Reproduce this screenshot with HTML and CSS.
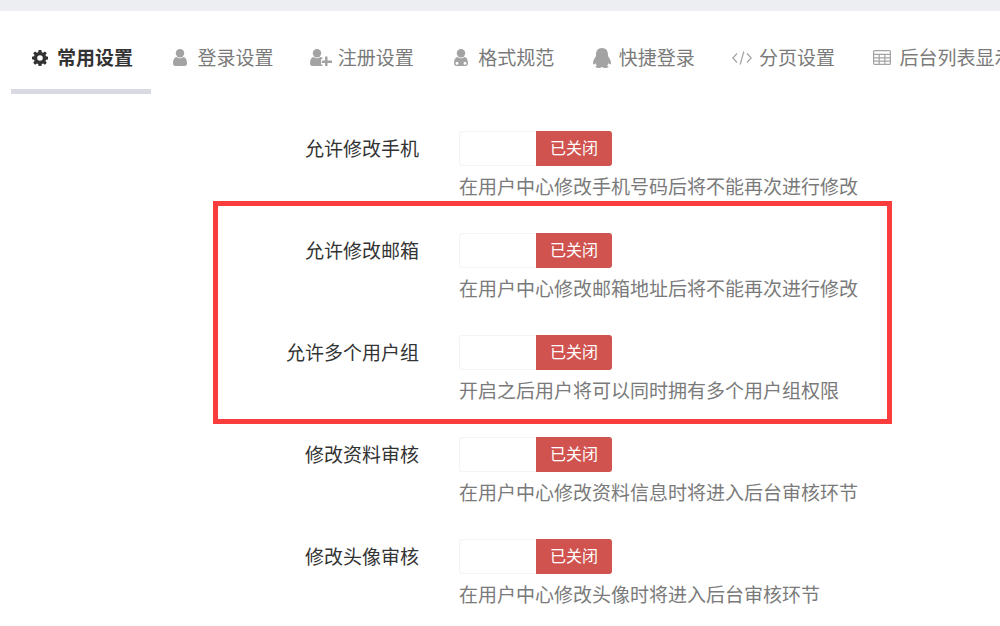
FILE: index.html
```html
<!DOCTYPE html>
<html lang="zh-CN">
<head>
    <meta charset="UTF-8">
    <title>常用设置</title>
    <link rel="stylesheet" href="styles.css">
</head>

<body>
    <div class="top-bar"></div>

    <!-- 选项卡 -->
    <ul class="tabs">
        <li class="tab active">
            <span class="tab-icon">
                <svg width="16" height="16" viewBox="0 0 16 16"><path fill-rule="evenodd" d="M6.600 0h2.800l.4 2.200 1.200.5L12.900 1.400 14.800 3.300 13.500 5.100l.5 1.200 2 .4v2.700l-2 .4-.5 1.200 1.300 1.800-1.900 1.900-1.900-1.300-1.200.5-.4 2.100H6.600l-.4-2.100-1.200-.5-1.900 1.300L1.200 12.700l1.300-1.800-.5-1.200-2-.4V6.700l2-.4.5-1.200L1.200 3.300 3.100 1.400 5 2.700l1.200-.5zM8 5.200a2.800 2.800 0 1 0 0 5.600 2.800 2.800 0 0 0 0-5.600z"/></svg>
            </span>
            常用设置
        </li>
        <li class="tab">
            <span class="tab-icon">
                <svg width="14" height="17" viewBox="0 0 14 17"><circle cx="7" cy="4.300" r="4.200"/><path d="M0 14.500C0 10.500 1.500 8.300 3.600 8c1 .9 2.100 1.300 3.400 1.300S9.400 8.900 10.400 8C12.500 8.300 14 10.500 14 14.500 14 16 13 17 11.600 17H2.400C1 17 0 16 0 14.500z"/></svg>
            </span>
            登录设置
        </li>
        <li class="tab">
            <span class="tab-icon">
                <svg width="22" height="17" viewBox="0 0 22 17"><circle cx="7" cy="4.300" r="4.200"/><path d="M0 14.500C0 10.500 1.500 8.300 3.600 8c1 .9 2.100 1.300 3.400 1.300S9.400 8.900 10.400 8c.8.100 1.500.5 2.100 1.100V10h-1.500v5.500h1.500V17H2.400C1 17 0 16 0 14.500z"/><path d="M15 7.500h2.500V11.500H22v2.500h-4.500v3H15v-3h-3.200v-2.500H15z"/></svg>
            </span>
            注册设置
        </li>
        <li class="tab">
            <span class="tab-icon">
                <svg width="16" height="17" viewBox="0 0 16 17"><circle cx="8" cy="4.300" r="4.200"/><path fill-rule="evenodd" d="M1 14.500C1 10.500 2.500 8.300 4.600 8c1 .9 2.100 1.300 3.400 1.300S10.400 8.900 11.400 8C13.500 8.300 15 10.500 15 14.500 15 16 14 17 12.600 17H3.400C2 17 1 16 1 14.500zM4 12.800a1.500 1.500 0 1 0 0 3 1.500 1.500 0 0 0 0-3zm8 0a1.500 1.500 0 1 0 0 3 1.500 1.500 0 0 0 0-3z"/></svg>
            </span>
            格式规范
        </li>
        <li class="tab">
            <span class="tab-icon">
                <svg width="20" height="20" viewBox="0 0 20 20"><path d="M10 0c3.800 0 6 2.800 6 6.500 0 1 0 1.500.5 2.500 1.200 1.500 2.500 4 2.500 6 0 1.200-.6 1.500-1 1.400-.5-.1-1-.7-1.500-1.500-.2 1-.7 1.800-1.500 2.600 1 .4 1.500.8 1.500 1.300 0 .6-1.200 1.200-3 1.200-1.300 0-2.500-.4-3.200-1H9.700c-.7.600-1.900 1-3.200 1-1.800 0-3-.6-3-1.200 0-.5.500-.9 1.500-1.300-.8-.8-1.300-1.600-1.500-2.600-.5.800-1 1.400-1.500 1.500-.4.100-1-.2-1-1.400 0-2 1.300-4.500 2.500-6 .5-1 .5-1.500.5-2.500C4 2.800 6.200 0 10 0z"/></svg>
            </span>
            快捷登录
        </li>
        <li class="tab">
            <span class="tab-icon">
                <svg width="20" height="16" viewBox="0 0 20 16" fill="none" stroke="#a3a3a3" stroke-width="1.200"><path d="M5 3.500 .8 8 5 12.500M15 3.500 19.200 8 15 12.500M11.800 1.500 8.200 14.500"/></svg>
            </span>
            分页设置
        </li>
        <li class="tab">
            <span class="tab-icon">
                <svg width="18" height="15" viewBox="0 0 18 15" fill="none" stroke="#a3a3a3" stroke-width="1.200"><rect x=".6" y=".6" width="16.800" height="13.800" rx="1"/><path d="M.6 4.400h16.800M.6 7.800h16.800M.6 11.100h16.800M6.200 4.400v10M11.800 4.400v10"/></svg>
            </span>
            后台列表显示
        </li>
    </ul>

    <!-- 表单 -->
    <div class="form">
        <div class="form-row">
            <label class="form-label">允许修改手机</label>
            <div class="form-field">
                <div class="switch"><span class="switch-blank"></span><span class="switch-off">已关闭</span></div>
                <p class="help">在用户中心修改手机号码后将不能再次进行修改</p>
            </div>
        </div>
        <div class="form-row">
            <label class="form-label">允许修改邮箱</label>
            <div class="form-field">
                <div class="switch"><span class="switch-blank"></span><span class="switch-off">已关闭</span></div>
                <p class="help">在用户中心修改邮箱地址后将不能再次进行修改</p>
            </div>
        </div>
        <div class="form-row">
            <label class="form-label">允许多个用户组</label>
            <div class="form-field">
                <div class="switch"><span class="switch-blank"></span><span class="switch-off">已关闭</span></div>
                <p class="help">开启之后用户将可以同时拥有多个用户组权限</p>
            </div>
        </div>
        <div class="form-row">
            <label class="form-label">修改资料审核</label>
            <div class="form-field">
                <div class="switch"><span class="switch-blank"></span><span class="switch-off">已关闭</span></div>
                <p class="help">在用户中心修改资料信息时将进入后台审核环节</p>
            </div>
        </div>
        <div class="form-row">
            <label class="form-label">修改头像审核</label>
            <div class="form-field">
                <div class="switch"><span class="switch-blank"></span><span class="switch-off">已关闭</span></div>
                <p class="help">在用户中心修改头像时将进入后台审核环节</p>
            </div>
        </div>
    </div>

    <!-- 红框标注 -->
    <div class="mark-box"></div>
</body>
</html>
```

FILE: styles.css
```css
html, body {
    height: 100%;
}
body {
    margin: 0;
    background-color: #fff;
    color: #333;
    font-family: "Liberation Sans", "Noto Sans CJK SC", sans-serif;
    font-size: 19px;
    overflow: hidden;
    position: relative;
}

.top-bar {
    height: 11px;
    background-color: #eceef1;
}

/* 选项卡 */
.tabs {
    display: flex;
    margin: 0;
    padding: 0 0 0 11px;
    list-style: none;
    white-space: nowrap;
}
.tab {
    flex: none;
    display: flex;
    align-items: center;
    gap: 9px;
    padding: 36px 18.4px 23px 21px;
    box-sizing: border-box;
    color: #7a7a7a;
    line-height: 24px;
}
.tab.active {
    color: #333;
    font-weight: bold;
    border-bottom: 5px solid #d9d9e1;
    padding-bottom: 18px;
}
.tab-icon {
    width: 16px;
    display: flex;
    justify-content: center;
    margin-bottom: 3px;
    fill: #a3a3a3;
}
.tab.active .tab-icon {
    fill: #333;
}
.tab-icon svg {
    flex: none;
}

/* 表单 */
.form {
    padding-top: 37px;
}
.form-row {
    display: flex;
    height: 102px;
}
.form-label {
    width: 419px;
    flex: none;
    text-align: right;
    line-height: 38px;
}
.form-field {
    margin-left: 40px;
}
.switch {
    display: flex;
    width: 153px;
    height: 35px;
    box-sizing: border-box;
    border: 1px solid #f2f2f7;
    border-radius: 3px;
}
.switch-blank {
    flex: 1;
}
.switch-off {
    width: 76px;
    margin: -1px -1px -1px 0;
    border-radius: 0 3px 3px 0;
    background-color: #d0534f;
    color: #fff;
    font-size: 16px;
    line-height: 35px;
    text-align: center;
}
.help {
    margin: 10px 0 0;
    color: #7a7a7a;
    line-height: 24px;
}

.mark-box {
    position: absolute;
    left: 213px;
    top: 201px;
    width: 679px;
    height: 223px;
    box-sizing: border-box;
    border: 5px solid #f93d3d;
}
```
